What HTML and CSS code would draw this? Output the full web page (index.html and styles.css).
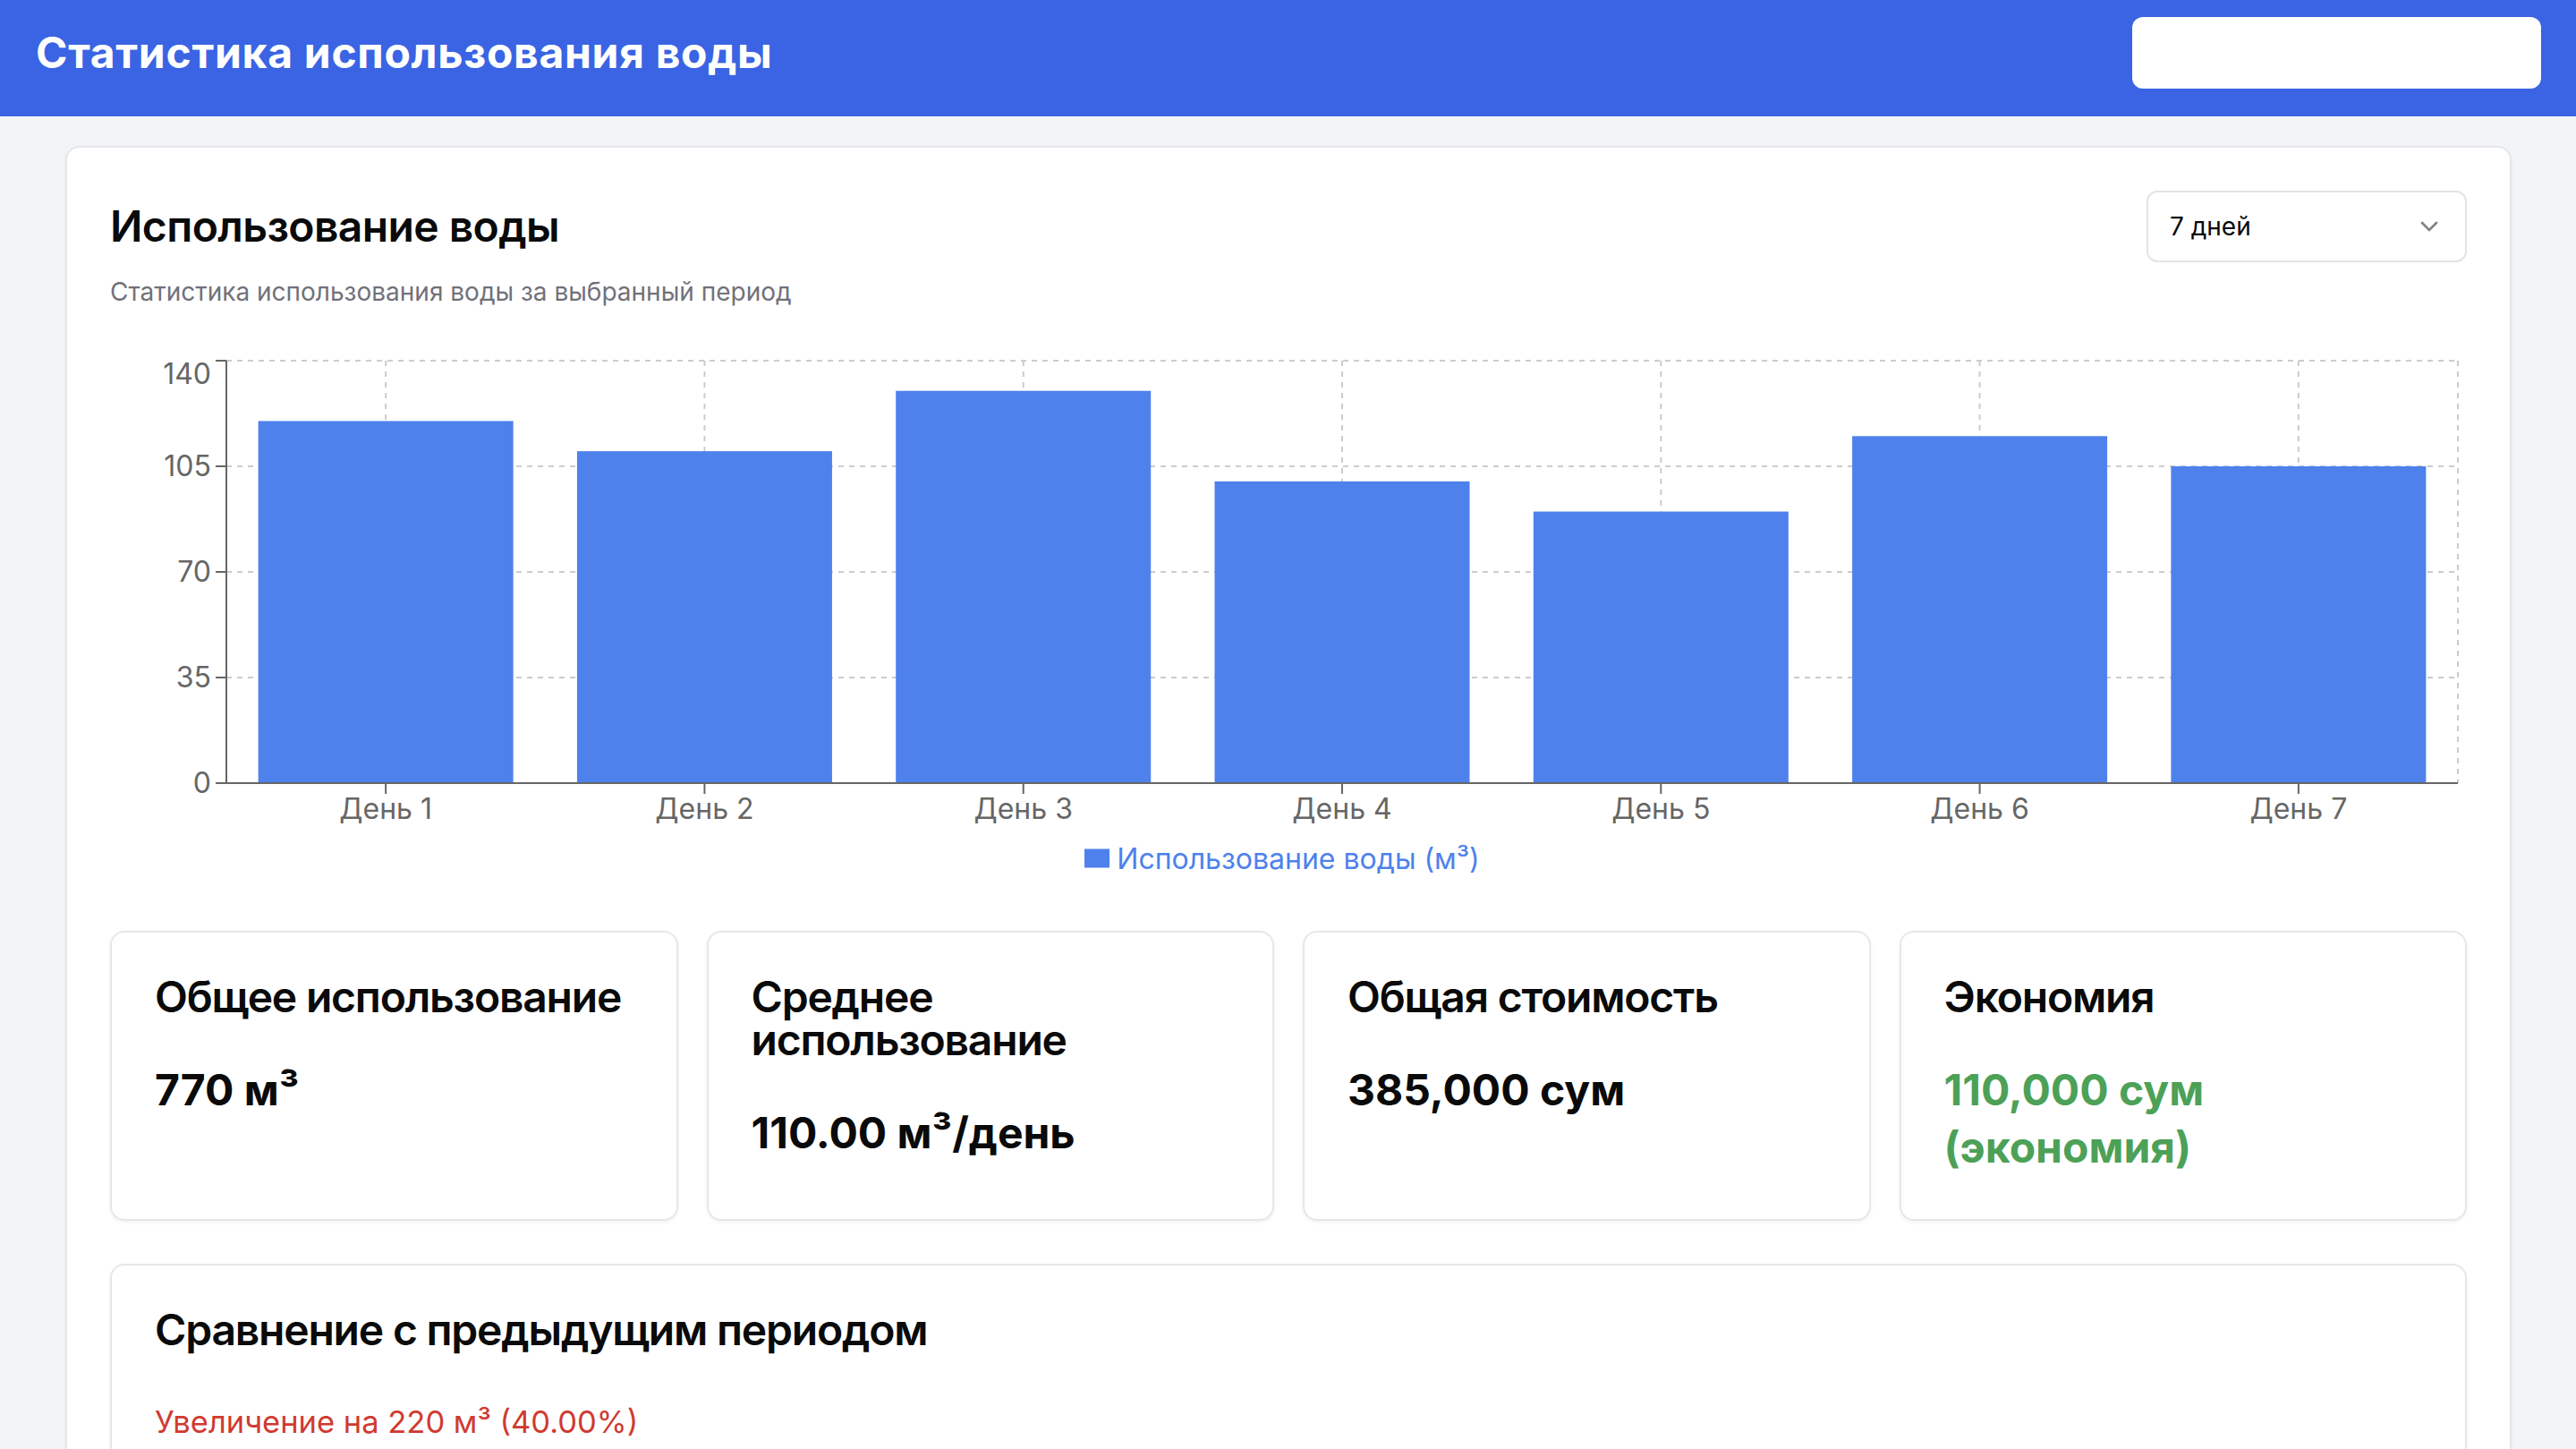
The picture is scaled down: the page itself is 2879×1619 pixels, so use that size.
FILE: index.html
```html
<!DOCTYPE html>
<html lang="ru">
<head>
<meta charset="utf-8">
<title>Статистика использования воды</title>
<link rel="stylesheet" href="styles.css">
</head>
<body>
<header class="topbar">
  <h1 class="topbar-title">Статистика использования воды</h1>
  <div class="topbar-slot"></div>
</header>
<main class="page">
  <section class="card main-card">
    <div class="main-head">
      <h2 class="card-title main-title">Использование воды</h2>
      <div class="select">
        <span>7 дней</span>
        <svg class="chev" width="32" height="32" viewBox="0 0 24 24"><path d="m6 9 6 6 6-6" fill="none" stroke="currentColor" stroke-width="2" stroke-linecap="round" stroke-linejoin="round"/></svg>
      </div>
    </div>
    <p class="card-desc">Статистика использования воды за выбранный период</p>

    <div class="chart">
      <svg class="chart-svg" width="2634" height="542" viewBox="0 0 2634 542">
        <g class="grid">
          <line x1="130" y1="10" x2="2624" y2="10"/>
          <line x1="130" y1="128" x2="2624" y2="128"/>
          <line x1="130" y1="246" x2="2624" y2="246"/>
          <line x1="130" y1="364" x2="2624" y2="364"/>
          <line x1="308.14" y1="10" x2="308.14" y2="482"/>
          <line x1="664.43" y1="10" x2="664.43" y2="482"/>
          <line x1="1020.71" y1="10" x2="1020.71" y2="482"/>
          <line x1="1377" y1="10" x2="1377" y2="482"/>
          <line x1="1733.29" y1="10" x2="1733.29" y2="482"/>
          <line x1="2089.57" y1="10" x2="2089.57" y2="482"/>
          <line x1="2445.86" y1="10" x2="2445.86" y2="482"/>
          <line x1="2624" y1="10" x2="2624" y2="482"/>
        </g>
        <g class="bars">
          <rect x="165.64" y="77.43" width="285" height="404.57"/>
          <rect x="521.93" y="111.14" width="285" height="370.86"/>
          <rect x="878.21" y="43.71" width="285" height="438.29"/>
          <rect x="1234.5" y="144.86" width="285" height="337.14"/>
          <rect x="1590.79" y="178.57" width="285" height="303.43"/>
          <rect x="1947.07" y="94.29" width="285" height="387.71"/>
          <rect x="2303.36" y="128" width="285" height="354"/>
        </g>
        <g class="axis">
          <line x1="130" y1="10" x2="130" y2="482"/>
          <line x1="130" y1="482" x2="2624" y2="482"/>
          <line x1="118" y1="10" x2="130" y2="10"/>
          <line x1="118" y1="128" x2="130" y2="128"/>
          <line x1="118" y1="246" x2="130" y2="246"/>
          <line x1="118" y1="364" x2="130" y2="364"/>
          <line x1="118" y1="482" x2="130" y2="482"/>
          <line x1="308.14" y1="482" x2="308.14" y2="494"/>
          <line x1="664.43" y1="482" x2="664.43" y2="494"/>
          <line x1="1020.71" y1="482" x2="1020.71" y2="494"/>
          <line x1="1377" y1="482" x2="1377" y2="494"/>
          <line x1="1733.29" y1="482" x2="1733.29" y2="494"/>
          <line x1="2089.57" y1="482" x2="2089.57" y2="494"/>
          <line x1="2445.86" y1="482" x2="2445.86" y2="494"/>
        </g>
        <g class="ylabels">
          <text x="113" y="25" dy="0.355em">140</text>
          <text x="113" y="128" dy="0.355em">105</text>
          <text x="113" y="246" dy="0.355em">70</text>
          <text x="113" y="364" dy="0.355em">35</text>
          <text x="113" y="482" dy="0.355em">0</text>
        </g>
        <g class="xlabels">
          <text x="308.14" y="499" dy="0.71em">День 1</text>
          <text x="664.43" y="499" dy="0.71em">День 2</text>
          <text x="1020.71" y="499" dy="0.71em">День 3</text>
          <text x="1377" y="499" dy="0.71em">День 4</text>
          <text x="1733.29" y="499" dy="0.71em">День 5</text>
          <text x="2089.57" y="499" dy="0.71em">День 6</text>
          <text x="2445.86" y="499" dy="0.71em">День 7</text>
        </g>
      </svg>
      <div class="legend">
        <svg class="legend-icon" width="28" height="28" viewBox="0 0 32 32"><path d="M0,4h32v24h-32z"/></svg>
        <span>Использование воды (м³)</span>
      </div>
    </div>

    <div class="stats">
      <div class="card stat">
        <div class="stat-head"><h3 class="card-title">Общее использование</h3></div>
        <div class="stat-body"><p class="stat-value">770 м³</p></div>
      </div>
      <div class="card stat">
        <div class="stat-head"><h3 class="card-title">Среднее использование</h3></div>
        <div class="stat-body"><p class="stat-value">110.00 м³/день</p></div>
      </div>
      <div class="card stat">
        <div class="stat-head"><h3 class="card-title">Общая стоимость</h3></div>
        <div class="stat-body"><p class="stat-value">385,000 сум</p></div>
      </div>
      <div class="card stat">
        <div class="stat-head"><h3 class="card-title">Экономия</h3></div>
        <div class="stat-body"><p class="stat-value positive">110,000 сум (экономия)</p></div>
      </div>
    </div>

    <div class="card compare">
      <div class="stat-head"><h3 class="card-title">Сравнение с предыдущим периодом</h3></div>
      <div class="compare-body"><p class="compare-text">Увеличение на 220 м³ (40.00%)</p></div>
    </div>
  </section>
</main>
</body>
</html>
```

FILE: styles.css
```css
* {
  box-sizing: border-box;
}

html,
body {
  margin: 0;
}

body {
  background: #f3f4f6;
  font-family: Inter, "Noto Sans", sans-serif;
  color: #0a0a0a;
}

.topbar {
  background: #3a64e3;
  height: 130px;
  display: flex;
  align-items: flex-start;
  justify-content: space-between;
  padding: 19px 39px 0 40px;
}

.topbar-title {
  margin: 0;
  color: #ffffff;
  font-size: 48px;
  font-weight: 700;
  line-height: 80px;
  letter-spacing: 0.7px;
}

.topbar-slot {
  width: 457px;
  height: 80px;
  background: #ffffff;
  border-radius: 12px;
}

.page {
  padding: 33px 72px 48px 73px;
}

.card {
  background: #ffffff;
  border: 2px solid #e5e7eb;
  border-radius: 16px;
  box-shadow: 0 2px 4px rgba(0, 0, 0, 0.05);
}

.main-card {
  padding: 48px;
}

.main-head {
  display: flex;
  justify-content: space-between;
  align-items: center;
  height: 80px;
}

.card-title {
  margin: 0;
  font-size: 48px;
  line-height: 48px;
  font-weight: 600;
  letter-spacing: -1.2px;
  color: #0a0a0a;
}

.main-title {
  letter-spacing: -0.6px;
}

.select {
  width: 358px;
  height: 80px;
  border: 2px solid #e4e4e7;
  border-radius: 12px;
  display: flex;
  align-items: center;
  justify-content: space-between;
  padding: 0 24px;
  font-size: 28px;
  color: #0a0a0a;
}

.chev {
  opacity: 0.5;
  display: block;
}

.card-desc {
  margin: 13px 0 0;
  font-size: 28px;
  line-height: 40px;
  color: #71717a;
}

.chart {
  margin-top: 47px;
  height: 600px;
}

.chart-svg {
  display: block;
}

.grid line {
  stroke: #cccccc;
  stroke-width: 2;
  stroke-dasharray: 6 6;
}

.bars rect {
  fill: #4e81ec;
}

.axis line {
  stroke: #666666;
  stroke-width: 2;
}

.ylabels text,
.xlabels text {
  fill: #666666;
  font-size: 32px;
  font-family: Inter, "Noto Sans", sans-serif;
}

.ylabels text {
  text-anchor: end;
}

.xlabels text {
  text-anchor: middle;
}

.legend {
  height: 48px;
  display: flex;
  justify-content: center;
  align-items: center;
  gap: 8px;
  padding-right: 14px;
  color: #4e81ec;
  font-size: 32px;
}

.legend-icon {
  display: block;
  fill: #4e81ec;
}

.stats {
  margin-top: 47px;
  display: grid;
  grid-template-columns: repeat(4, 1fr);
  gap: 32px;
}

.stat-head {
  padding: 48px;
}

.stat-body {
  padding: 0 48px 48px;
}

.stat-value {
  margin: 0;
  font-size: 48px;
  line-height: 64px;
  font-weight: 700;
  color: #0a0a0a;
}

.stat-value.positive {
  color: #4ca157;
}

.compare {
  margin-top: 48px;
}

.compare-body {
  padding: 7px 48px 48px;
}

.compare-text {
  margin: 0;
  font-size: 34.5px;
  line-height: 48px;
  color: #d03a30;
}
```
